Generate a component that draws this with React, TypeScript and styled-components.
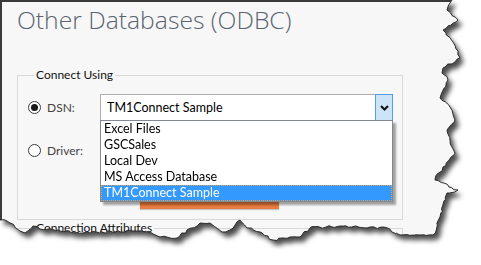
import styled, { createGlobalStyle } from 'styled-components'

const GlobalStyle = createGlobalStyle`
  html, body {
    margin: 0;
    padding: 0;
    background: #ffffff;
  }
  body {
    font-family: 'Segoe UI', Lato, 'Noto Sans', sans-serif;
  }
`

// torn paper edge, clockwise from top right corner to the left border
const TORN: [number, number][] = [
  [452, 0], [447, 10], [458, 20], [443, 30], [453, 42], [460, 58], [443, 68], [442, 73],
  [448, 80], [440, 98], [450, 107], [455, 120], [447, 130], [450, 140], [455, 153],
  [443, 167], [435, 180], [458, 190], [447, 193], [440, 217], [433, 235], [420, 235],
  [400, 235], [383, 227], [367, 228], [340, 226], [310, 228], [300, 237], [290, 237],
  [273, 240], [260, 232], [247, 228], [240, 220], [230, 230], [222, 232], [210, 223],
  [200, 223], [187, 230], [177, 238], [160, 237], [150, 232], [133, 231], [83, 233],
  [40, 229], [33, 226], [25, 233], [20, 231], [10, 223], [7, 221], [0, 220],
]

const roughen = (pts: [number, number][]) => {
  let seed = 7
  const rand = () => {
    seed = (seed * 16807) % 2147483647
    return seed / 2147483647 - 0.5
  }
  const out: [number, number][] = []
  for (let i = 0; i < pts.length - 1; i++) {
    const [x1, y1] = pts[i]
    const [x2, y2] = pts[i + 1]
    out.push([x1, y1])
    const n = Math.floor(Math.hypot(x2 - x1, y2 - y1) / 3)
    for (let k = 1; k < n; k++) {
      const t = k / n
      out.push([
        Math.round((x1 + (x2 - x1) * t + rand() * 2.4) * 10) / 10,
        Math.round((y1 + (y2 - y1) * t + rand() * 2.4) * 10) / 10,
      ])
    }
  }
  out.push(pts[pts.length - 1])
  return out
}

const EDGE = roughen(TORN)
const CLIP = `polygon(0px 0px, ${EDGE.map(([x, y]) => `${x}px ${y}px`).join(', ')})`
const EDGE_LINE = EDGE.map(([x, y]) => `${x},${y}`).join(' ')

const DSNS = ['Excel Files', 'GSCSales', 'Local Dev', 'MS Access Database', 'TM1Connect Sample']

export default function App() {
  return (
    <>
      <GlobalStyle />
      <Frame>
        <Shadow>
          <Panel>
            <Title>Other Databases (ODBC)</Title>

            <GroupBox>
              <Legend>Connect Using</Legend>
              <Row>
                <Radio $checked />
                <RadioLabel>DSN:</RadioLabel>
                <Combo>
                  <ComboText>TM1Connect Sample</ComboText>
                  <ComboButton>
                    <svg width="9" height="6" viewBox="0 0 9 6">
                      <path d="M1 1 L4.5 4.5 L8 1" fill="none" stroke="#111" strokeWidth="2" />
                    </svg>
                  </ComboButton>
                  <DropList>
                    {DSNS.map((name) => (
                      <DropItem key={name} $selected={name === 'TM1Connect Sample'}>
                        {name}
                      </DropItem>
                    ))}
                  </DropList>
                </Combo>
              </Row>
              <Row>
                <Radio />
                <RadioLabel>Driver:</RadioLabel>
                <Combo>
                  <ComboText />
                </Combo>
              </Row>
              {/* label is hidden under the open list */}
              <TestButton aria-label="Test Connection" />
            </GroupBox>

            <GroupBox $tail>
              <Legend>Connection Attributes</Legend>
            </GroupBox>
          </Panel>
        </Shadow>
        <EdgeLine width="481" height="265" viewBox="0 0 481 265">
          <polyline points={EDGE_LINE} fill="none" stroke="#2b2b2b" strokeWidth="1" />
        </EdgeLine>
      </Frame>
    </>
  )
}

const Frame = styled('div')`
  position: relative;
  width: 481px;
  height: 265px;
  overflow: hidden;
  background: #ffffff;
`

const Shadow = styled('div')`
  width: 100%;
  height: 100%;
  filter: drop-shadow(4px 5px 2.5px rgba(0, 0, 0, 0.7));
`

const Panel = styled('div')`
  box-sizing: border-box;
  width: 100%;
  height: 100%;
  background: #f7f7f7;
  border-top: 2px solid #3a3a3a;
  border-left: 2px solid #3a3a3a;
  padding: 0 0 0 15px;
  clip-path: ${CLIP};
`

const EdgeLine = styled('svg')`
  position: absolute;
  left: 0;
  top: 0;
  pointer-events: none;
`

const Title = styled('h1')`
  margin: 0;
  padding-top: 2px;
  font-family: 'Segoe UI', 'Open Sans', sans-serif;
  font-weight: 300;
  font-size: 24.7px;
  line-height: 32px;
  color: #5a6470;
`

const GroupBox = styled('fieldset')<{ $tail?: boolean }>`
  box-sizing: border-box;
  width: 386px;
  margin: ${(p) => (p.$tail ? '0' : '31px 0 0 0')};
  border: 1px solid #d9d9d9;
  padding: 11px 0 10px 10px;
  min-height: ${(p) => (p.$tail ? '40px' : 'auto')};
`

const Legend = styled('legend')`
  margin-left: 6px;
  padding: 0 2px;
  font-size: 12px;
  line-height: 16px;
  color: #111;
`

const Row = styled('div')`
  display: flex;
  align-items: center;
  height: 27px;
  & + & {
    margin-top: 16px;
  }
`

const Radio = styled('span')<{ $checked?: boolean }>`
  box-sizing: border-box;
  width: 13px;
  height: 13px;
  border-radius: 50%;
  border: 1px solid #3c3c3c;
  background: #ffffff;
  display: flex;
  align-items: center;
  justify-content: center;
  &::after {
    content: '';
    width: 7px;
    height: 7px;
    border-radius: 50%;
    background: #1a1a1a;
    display: ${(p) => (p.$checked ? 'block' : 'none')};
  }
`

const RadioLabel = styled('span')`
  width: 53px;
  margin-left: 6px;
  font-size: 12px;
  color: #444;
`

const Combo = styled('div')`
  position: relative;
  box-sizing: border-box;
  width: 293px;
  height: 27px;
  display: flex;
  align-items: center;
  background: #ffffff;
  border: 1px solid #adadad;
  border-bottom-color: #7a7a7a;
`

const ComboText = styled('span')`
  flex: 1;
  padding-left: 6px;
  font-size: 12.5px;
  color: #000;
`

const ComboButton = styled('span')`
  box-sizing: border-box;
  align-self: stretch;
  width: 18px;
  margin: -1px -1px -1px 0;
  display: flex;
  align-items: center;
  justify-content: center;
  background: #cce4f7;
  border: 1px solid #569de5;
`

const DropList = styled('ul')`
  position: absolute;
  z-index: 2;
  left: -1px;
  top: 100%;
  box-sizing: border-box;
  width: 293px;
  margin: 0;
  padding: 0;
  list-style: none;
  background: #ffffff;
  border: 1px solid #828790;
  box-shadow: 3px 3px 2px rgba(0, 0, 0, 0.35);
`

const DropItem = styled('li')<{ $selected?: boolean }>`
  box-sizing: border-box;
  height: 16px;
  padding-left: 3px;
  font-size: 12.5px;
  line-height: 15px;
  color: ${(p) => (p.$selected ? '#ffffff' : '#000000')};
  background: ${(p) => (p.$selected ? '#3399ff' : 'transparent')};
  outline: ${(p) => (p.$selected ? '1px dotted #e0a05a' : 'none')};
  outline-offset: -1px;
`

const TestButton = styled('button')`
  display: block;
  width: 139px;
  height: 24px;
  margin: 21px 0 0 112px;
  padding: 0;
  border: none;
  background: #e97c3e;
  box-shadow: 0 1px 1px rgba(0, 0, 0, 0.2);
`
